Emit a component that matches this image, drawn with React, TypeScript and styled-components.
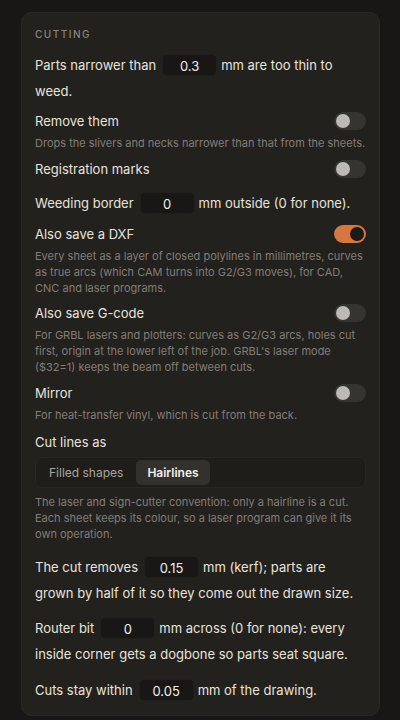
import React, { useState } from "react";
import styled, { createGlobalStyle } from "styled-components";

const Global = createGlobalStyle`
  html, body { margin: 0; padding: 0; background: #181715; }
  body { font-family: Inter, "Noto Sans", sans-serif; color: #e7e3dc; -webkit-font-smoothing: antialiased; }
  * { box-sizing: border-box; }
`;

const Page = styled.div`
  width: 400px;
  height: 720px;
  padding: 12px 20px 0 21px;
  overflow: hidden;
`;

const Card = styled.section`
  background: #23211e;
  border: 1px solid #2c2a27;
  border-radius: 11px;
  padding: 14px 13px 12px 13px;
  display: flex;
  flex-direction: column;
  gap: 9.5px;
`;

const Heading = styled.h3`
  margin: 0;
  font-size: 10px;
  line-height: 14px;
  font-weight: 500;
  letter-spacing: 1.5px;
  text-transform: uppercase;
  color: #8a857e;
`;

const Para = styled.p<{ $top?: number }>`
  margin: ${(p) => p.$top ?? 0}px 0 0 0;
  font-size: 13px;
  line-height: 26px;
  color: #e7e3dc;
`;

const NumBox = styled.span`
  display: inline-block;
  width: 55px;
  height: 22px;
  line-height: 22px;
  margin: 0 4px 0 6px;
  text-align: center;
  background: #181715;
  border: 1px solid #201f1c;
  border-radius: 5px;
  color: #f1eee9;
  font-size: 13px;
  vertical-align: middle;
  position: relative;
  top: -1px;
`;

const Setting = styled.div`
  display: flex;
  flex-direction: column;
`;

const SettingRow = styled.div`
  display: flex;
  align-items: center;
  justify-content: space-between;
  height: 16px;
  margin-bottom: 4px;
`;

const Label = styled.span`
  font-size: 13px;
  line-height: 20px;
  color: #e7e3dc;
`;

const Desc = styled.p`
  margin: 2px 0 0 0;
  font-size: 11px;
  line-height: 16px;
  color: #827d76;
`;

const Track = styled.button<{ $on: boolean }>`
  width: 32px;
  height: 18px;
  border: none;
  border-radius: 9px;
  background: ${(p) => (p.$on ? "#d5773f" : "#363431")};
  display: flex;
  align-items: center;
  justify-content: ${(p) => (p.$on ? "flex-end" : "flex-start")};
  padding: 0 2px;
  cursor: pointer;
  flex-shrink: 0;
`;

const Knob = styled.span<{ $on: boolean }>`
  width: 14px;
  height: 14px;
  border-radius: 50%;
  background: ${(p) => (p.$on ? "#1c1a18" : "#bdb9b3")};
`;

const Segmented = styled.div`
  display: flex;
  gap: 2px;
  padding: 2px;
  margin-top: 5px;
  background: #1e1d1a;
  border: 1px solid #292724;
  border-radius: 7px;
`;

const Seg = styled.button<{ $active: boolean }>`
  height: 25px;
  padding: 0 11px;
  border: none;
  border-radius: 5px;
  font-family: Inter, "Noto Sans", sans-serif;
  font-size: 12px;
  font-weight: ${(p) => (p.$active ? 600 : 400)};
  color: ${(p) => (p.$active ? "#f3f0eb" : "#a9a49c")};
  background: ${(p) => (p.$active ? "#33312d" : "transparent")};
  cursor: pointer;
`;

const Block = styled.div`
  display: flex;
  flex-direction: column;
`;

const SegDesc = styled(Desc)`
  margin-top: 6px;
`;

function Toggle({ on }: { on: boolean }) {
  const [v, setV] = useState(on);
  return (
    <Track $on={v} onClick={() => setV(!v)} aria-pressed={v}>
      <Knob $on={v} />
    </Track>
  );
}

function ToggleSetting({ label, desc, on = false }: { label: string; desc?: string; on?: boolean }) {
  return (
    <Setting>
      <SettingRow>
        <Label>{label}</Label>
        <Toggle on={on} />
      </SettingRow>
      {desc && <Desc>{desc}</Desc>}
    </Setting>
  );
}

export default function App() {
  const [mode, setMode] = useState("Hairlines");
  return (
    <>
      <Global />
      <Page>
        <Card>
          <Heading>Cutting</Heading>
          <Para $top={1}>
            Parts narrower than<NumBox>0.3</NumBox>mm are too thin to weed.
          </Para>
          <ToggleSetting label="Remove them" desc="Drops the slivers and necks narrower than that from the sheets." />
          <ToggleSetting label="Registration marks" />
          <Para>
            Weeding border<NumBox>0</NumBox>mm outside (0 for none).
          </Para>
          <ToggleSetting
            on
            label="Also save a DXF"
            desc="Every sheet as a layer of closed polylines in millimetres, curves as true arcs (which CAM turns into G2/G3 moves), for CAD, CNC and laser programs."
          />
          <ToggleSetting
            label="Also save G-code"
            desc="For GRBL lasers and plotters: curves as G2/G3 arcs, holes cut first, origin at the lower left of the job. GRBL's laser mode ($32=1) keeps the beam off between cuts."
          />
          <ToggleSetting label="Mirror" desc="For heat-transfer vinyl, which is cut from the back." />
          <Block>
            <Label>Cut lines as</Label>
            <Segmented>
              {["Filled shapes", "Hairlines"].map((m) => (
                <Seg key={m} $active={mode === m} onClick={() => setMode(m)}>
                  {m}
                </Seg>
              ))}
            </Segmented>
            <SegDesc>
              The laser and sign-cutter convention: only a hairline is a cut. Each sheet keeps its colour, so a laser program can give it its own operation.
            </SegDesc>
          </Block>
          <Para $top={2}>
            The cut removes<NumBox>0.15</NumBox>mm (kerf); parts are grown by half of it so they come out the drawn size.
          </Para>
          <Para>
            Router bit<NumBox>0</NumBox>mm across (0 for none): every inside corner gets a dogbone so parts seat square.
          </Para>
          <Para>
            Cuts stay within<NumBox>0.05</NumBox>mm of the drawing.
          </Para>
        </Card>
      </Page>
    </>
  );
}
